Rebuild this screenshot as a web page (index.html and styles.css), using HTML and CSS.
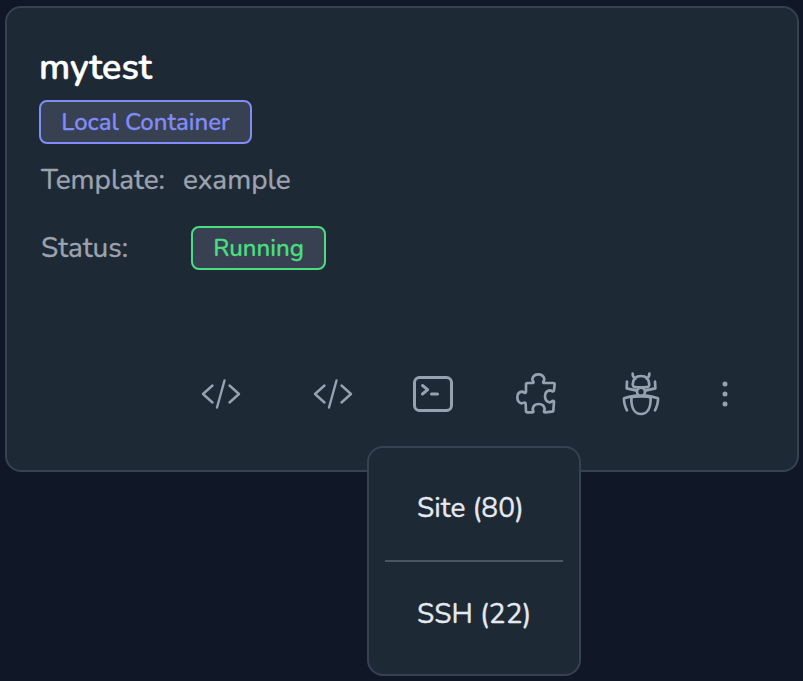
FILE: index.html
```html
<!DOCTYPE html>
<html lang="en">
<head>
<meta charset="utf-8">
<title>mytest</title>
<link rel="stylesheet" href="styles.css">
</head>
<body>
<main class="card">
  <h1 class="title"><span>mytest</span></h1>
  <div class="badge badge-type"><span>Local Container</span></div>
  <div class="row"><span class="label template">Template:</span><span class="example">example</span></div>
  <div class="row status-row"><span class="label status">Status:</span><div class="badge badge-running"><span>Running</span></div></div>
  <div class="actions">
    <svg class="icon" viewBox="0 0 48 48"><path class="thin" d="M15.5 15.5 6 24 15.5 32.5M27.5 10.5 20 37.5M32.5 15.5 42 24 32.5 32.5"/></svg>
    <svg class="icon" viewBox="0 0 48 48"><path class="thin" d="M15.5 15.5 6 24 15.5 32.5M27.5 10.5 20 37.5M32.5 15.5 42 24 32.5 32.5"/></svg>
    <div class="menu-anchor">
      <svg class="icon" viewBox="0 0 48 48"><rect x="5.5" y="7.5" width="37" height="33" rx="5"/><path d="m13.5 15.5 5.2 4.2-5.2 4.3M22.5 24h6"/></svg>
      <nav class="menu"><a class="item site"><span>Site (80)</span></a><a class="item ssh"><span>SSH (22)</span></a></nav>
    </div>
    <svg class="icon" viewBox="0 0 144 144"><path class="zoomed" d="M39 56V43q0-4 4-4H58q5 0 3-4-3-4-3-8 3-14 18-14t18 14q0 4-3 8-2 4 3 4H121q4 0 4 4L123 60q-1 6-5 4-4-3-8-3-14 2-14 18t14 18q4 0 8-4 5-2 5 3L121 121q0 4-4 4L97 127q-5 0-4-4 2-3 2-6-2-15-18-15t-18 15q0 3 2 6 2 4-4 4H43q-4 0-4-4L38 102q0-6-5-4-4 2-8 2-12-3-12-18t13-17q4 0 8 3 5 2 5-4z"/></svg>
    <svg class="icon" viewBox="0 0 144 144"><path class="zoomed" d="M50 50q-3-2-3-7 2-25 25-25t25 25q0 5-3 7-3 2-22 2t-22-2zM47 11q-1 9 8 15M97 11q1 9-8 15M30 35l-1 20 31 7M114 35l1 20-31 7M43 86q0-7 29-7t29 7c0 26-9 46-29 46S43 112 43 86zM30 121q-10-20-9-36 19-6 36-8M114 121q10-20 9-36-19-6-36-8"/><circle class="zoomed" cx="72" cy="65" r="12"/></svg>
    <svg class="icon dots" viewBox="0 0 48 48"><circle cx="24" cy="14" r="2.5"/><circle cx="24" cy="24" r="2.5"/><circle cx="24" cy="34" r="2.5"/></svg>
  </div>
</main>
</body>
</html>
```
FILE: styles.css
```css
* { box-sizing: border-box; }
body {
  margin: 0;
  min-height: 681px;
  padding: 6px 4px 0 5px;
  background: #101726;
  color: #9ca3af;
  font: 28px/40px Nunito, Lato, sans-serif;
  white-space: nowrap;
  -webkit-text-stroke: 0.35px currentColor;
}
.card {
  height: 466px;
  padding: 38px 32px 0;
  background: #1e2936;
  border: 2px solid #374151;
  border-radius: 16px;
}
.title { margin: 0 0 8px; height: 46px; font-size: 36px; line-height: 44px; font-weight: 600; color: #fff; -webkit-text-stroke-width: 0.5px; }
.badge {
  display: flex;
  align-items: center;
  justify-content: center;
  height: 44px;
  font-size: 24px;
  line-height: 40px;
  font-weight: 500;
  background: #374151;
  border: 2px solid currentColor;
  border-radius: 8px;
  -webkit-text-stroke-width: 0.3px;
  -webkit-text-stroke-color: currentColor;
}
.badge-type { width: 213px; color: #818cf8; }
.badge-running { width: 135px; color: #4ade80; }
.row { display: flex; align-items: center; height: 44px; margin-top: 14px; padding-left: 2px; }
.status-row { margin-top: 24px; }
.label { width: 142px; }
.status { width: 150px; }
.status-row .badge { flex: none; }
.actions { display: flex; margin: 100px 0 0 158px; height: 48px; }
.icon { display: block; flex: none; width: 48px; height: 48px; fill: none; stroke: #97a2b0; stroke-width: 3; stroke-linecap: round; stroke-linejoin: round; }
.icon + .icon { margin-left: 64px; }
.menu-anchor { position: relative; margin-left: 52px; }
.menu-anchor + .icon { margin-left: 56px; }
.menu-anchor + .icon + .icon { margin-left: 56px; }
.thin { stroke-width: 2.4; }
.zoomed { stroke-width: 8; }
.menu-anchor + .icon + .icon + .dots { margin-left: 36px; fill: #97a2b0; stroke: none; }
.menu {
  position: absolute;
  top: 76px;
  left: -42px;
  width: 214px;
  height: 230px;
  padding: 8px 16px;
  background: #1e2936;
  border: 2px solid #374151;
  border-radius: 16px;
  color: #e5e9f0;
}
.item { display: flex; align-items: center; height: 106px; padding-left: 32px; }
.item + .item { height: 104px; }
.site { border-bottom: 2px solid #4b5563; }
```
